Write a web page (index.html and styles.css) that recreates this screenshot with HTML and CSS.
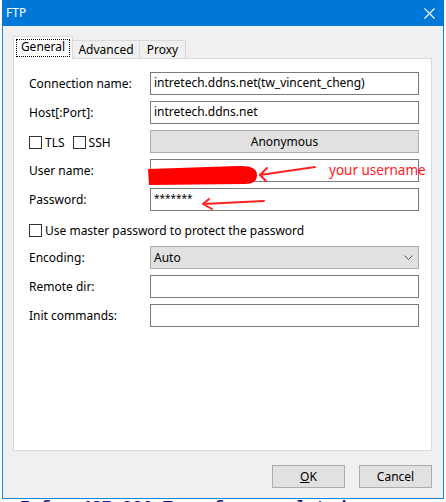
FILE: index.html
```html
<!DOCTYPE html>
<html lang="en">
<head>
  <meta charset="UTF-8">
  <title>FTP</title>
  <link rel="stylesheet" href="styles.css">
</head>
<body>
  <div class="screen">
    <div class="window">
      <div class="titlebar">
        <span class="title">FTP</span>
        <svg class="close" width="11" height="11" viewBox="0 0 11 11">
          <path d="M0.5 0.5 L10.5 10.5 M10.5 0.5 L0.5 10.5" stroke="#fff" stroke-width="1.1" fill="none"/>
        </svg>
      </div>

      <div class="client">
        <div class="tabs">
          <div class="tab active"><span class="focus">General</span></div>
          <div class="tab tab-advanced">Advanced</div>
          <div class="tab tab-proxy">Proxy</div>
        </div>

        <div class="panel">
          <div class="form">
            <label class="lbl">Connection name:</label>
            <div class="field">intretech.ddns.net(tw_vincent_cheng)</div>

            <label class="lbl">Host[:Port]:</label>
            <div class="field">intretech.ddns.net</div>

            <div class="checks">
              <span class="check"><span class="box"></span>TLS</span>
              <span class="check"><span class="box"></span>SSH</span>
            </div>
            <div class="btn wide">Anonymous</div>

            <label class="lbl">User name:</label>
            <div class="field"></div>

            <label class="lbl">Password:</label>
            <div class="field pw">*******</div>

            <div class="check full"><span class="box"></span>Use master password to protect the password</div>

            <label class="lbl">Encoding:</label>
            <div class="combo">
              <span>Auto</span>
              <svg width="9" height="5" viewBox="0 0 9 5"><path d="M0.5 0.5 L4.5 4.5 L8.5 0.5" stroke="#555" fill="none"/></svg>
            </div>

            <label class="lbl">Remote dir:</label>
            <div class="field"></div>

            <label class="lbl">Init commands:</label>
            <div class="field"></div>
          </div>
        </div>

        <div class="buttons">
          <div class="btn"><u>O</u>K</div>
          <div class="btn">Cancel</div>
        </div>
      </div>
    </div>
    <div class="log">Info: 437 226 Transfer completed.</div>

    <!-- red markup drawn on top of the screenshot -->
    <svg class="annot" width="446" height="502" viewBox="0 0 446 502">
      <path d="M148 169 L238 166 Q257 165 257 175 Q257 184 245 184 L149 185 Z" fill="#ff0000"/>
      <path d="M315 167 L260 175 M260 175 L267 168 M260 175 L266 181" stroke="#f22" stroke-width="2" fill="none" stroke-linecap="round"/>
      <path d="M264 201 L203 204 M203 204 L209 199 M203 204 L212 209" stroke="#f22" stroke-width="2" fill="none" stroke-linecap="round"/>
    </svg>
    <span class="note">your username</span>
  </div>
</body>
</html>
```

FILE: styles.css
```css
body {
  margin: 0;
  background: #ffffff;
  font-family: "Noto Sans", "Open Sans", sans-serif;
  font-size: 12px;
  color: #000;
}
.screen {
  position: relative;
  width: 446px;
  height: 502px;
  overflow: hidden;
}
.window {
  margin-left: 2px;
  width: 442px;
  box-sizing: border-box;
  border: 1px solid #1883d7;
  border-top: 0;
  background: #f0f0f0;
}
.titlebar {
  height: 26px;
  background: #0078d7;
  display: flex;
  align-items: center;
  justify-content: space-between;
  padding: 0 9px 0 4px;
  margin: 0 -1px;
}
.title {
  color: #fff;
  font-size: 12px;
  line-height: 26px;
}
.close {
  display: block;
}
.client {
  padding: 10px 11px 10px 10px;
}
.tabs {
  display: flex;
  align-items: flex-end;
  height: 22px;
  position: relative;
  z-index: 1;
}
.tab {
  height: 18px;
  box-sizing: border-box;
  border: 1px solid #d9d9d9;
  border-bottom: 0;
  background: #f0f0f0;
  margin-left: -1px;
  line-height: 17px;
  text-align: center;
}
.tab.active {
  width: 60px;
  height: 23px;
  margin-left: 0;
  margin-bottom: -1px;
  background: #fff;
  padding: 2px 0 0 2px;
  position: relative;
  z-index: 2;
}
.focus {
  display: block;
  width: 54px;
  height: 18px;
  box-sizing: border-box;
  border: 1px dotted #000;
  line-height: 14px;
}
.tab-advanced {
  width: 68px;
}
.tab-proxy {
  width: 47px;
}
.panel {
  height: 393px;
  box-sizing: border-box;
  border: 1px solid #d9d9d9;
  background: #fff;
  padding: 13px 12px 0 15px;
}
.form {
  display: grid;
  grid-template-columns: 121px 1fr;
  grid-auto-rows: 23px;
  row-gap: 6px;
}
.lbl {
  display: flex;
  align-items: center;
}
.field {
  box-sizing: border-box;
  border: 1px solid #7a7a7a;
  background: #fff;
  padding: 0 3px;
  line-height: 20px;
  white-space: nowrap;
  overflow: hidden;
}
.field.pw {
  font-size: 10px;
  line-height: 18px;
}
.checks {
  display: flex;
  align-items: center;
  gap: 8px;
  padding-top: 2px;
}
.check {
  display: flex;
  align-items: center;
}
.check.full {
  grid-column: 1 / 3;
  margin-top: 3px;
}
.box {
  width: 13px;
  height: 13px;
  box-sizing: border-box;
  border: 1px solid #333;
  background: #fff;
  margin-right: 3px;
}
.btn {
  box-sizing: border-box;
  border: 1px solid #adadad;
  background: #e1e1e1;
  text-align: center;
  line-height: 21px;
}
.combo {
  box-sizing: border-box;
  border: 1px solid #adadad;
  background: #e1e1e1;
  display: flex;
  align-items: center;
  justify-content: space-between;
  padding: 0 5px 0 3px;
}
.buttons {
  display: flex;
  justify-content: flex-end;
  gap: 14px;
  padding-top: 14px;
}
.buttons .btn {
  width: 73px;
  height: 23px;
}
.log {
  margin-top: -1px;
  padding-left: 20px;
  font-family: "Liberation Mono", monospace;
  font-size: 17px;
  font-weight: bold;
  color: #1a1a6e;
  white-space: nowrap;
}
.annot {
  position: absolute;
  left: 0;
  top: 0;
  pointer-events: none;
}
.note {
  position: absolute;
  left: 329px;
  top: 160px;
  color: #ff1a1a;
  font-size: 13.5px;
  line-height: 20px;
}
```
